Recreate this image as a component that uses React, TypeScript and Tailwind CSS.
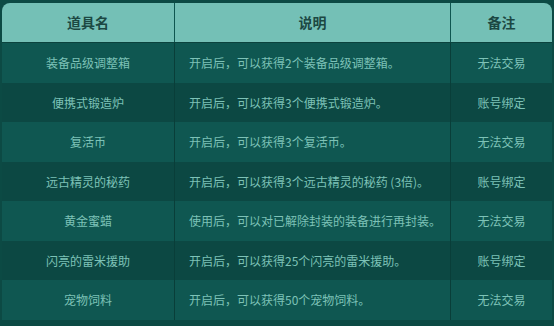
const rows = [
  ["装备品级调整箱", "开启后，可以获得2个装备品级调整箱。", "无法交易"],
  ["便携式锻造炉", "开启后，可以获得3个便携式锻造炉。", "账号绑定"],
  ["复活币", "开启后，可以获得3个复活币。", "无法交易"],
  ["远古精灵的秘药", "开启后，可以获得3个远古精灵的秘药 (3倍)。", "账号绑定"],
  ["黄金蜜蜡", "使用后，可以对已解除封装的装备进行再封装。", "无法交易"],
  ["闪亮的雷米援助", "开启后，可以获得25个闪亮的雷米援助。", "账号绑定"],
  ["宠物饲料", "开启后，可以获得50个宠物饲料。", "无法交易"],
];

export default function App() {
  return (
    <div
      className="h-[326px] w-[554px] bg-[#0c4a44] px-[2px] pt-[3px]"
      style={{ fontFamily: '"Microsoft YaHei", "Noto Sans CJK SC", sans-serif' }}
    >
      {/* Header */}
      <div className="grid h-[40px] grid-cols-[173px_276px_101px] rounded-t-[8px] border-b border-[#0b433e] bg-[#74c0b6] text-[14px] font-bold text-[#1c4843]">
        <div className="flex items-center justify-center border-r border-[#0f5650]">道具名</div>
        <div className="flex items-center justify-center border-r border-[#0f5650]">说明</div>
        <div className="flex items-center justify-center">备注</div>
      </div>

      {/* Body */}
      {rows.map((r, i) => (
        <div
          key={r[0]}
          className={
            i % 2 === 0
              ? "grid h-[40px] grid-cols-[173px_276px_101px] bg-[#0f5751] text-[12px] text-[#7dc2b7]"
              : "grid h-[39px] grid-cols-[173px_276px_101px] bg-[#0c4843] text-[12px] text-[#7dc2b7]"
          }
        >
          <div className="flex items-center justify-center border-r border-[#093e39]">{r[0]}</div>
          <div className="flex items-center border-r border-[#093e39] pl-[14px]">{r[1]}</div>
          <div className="flex items-center justify-center">{r[2]}</div>
        </div>
      ))}
    </div>
  );
}
